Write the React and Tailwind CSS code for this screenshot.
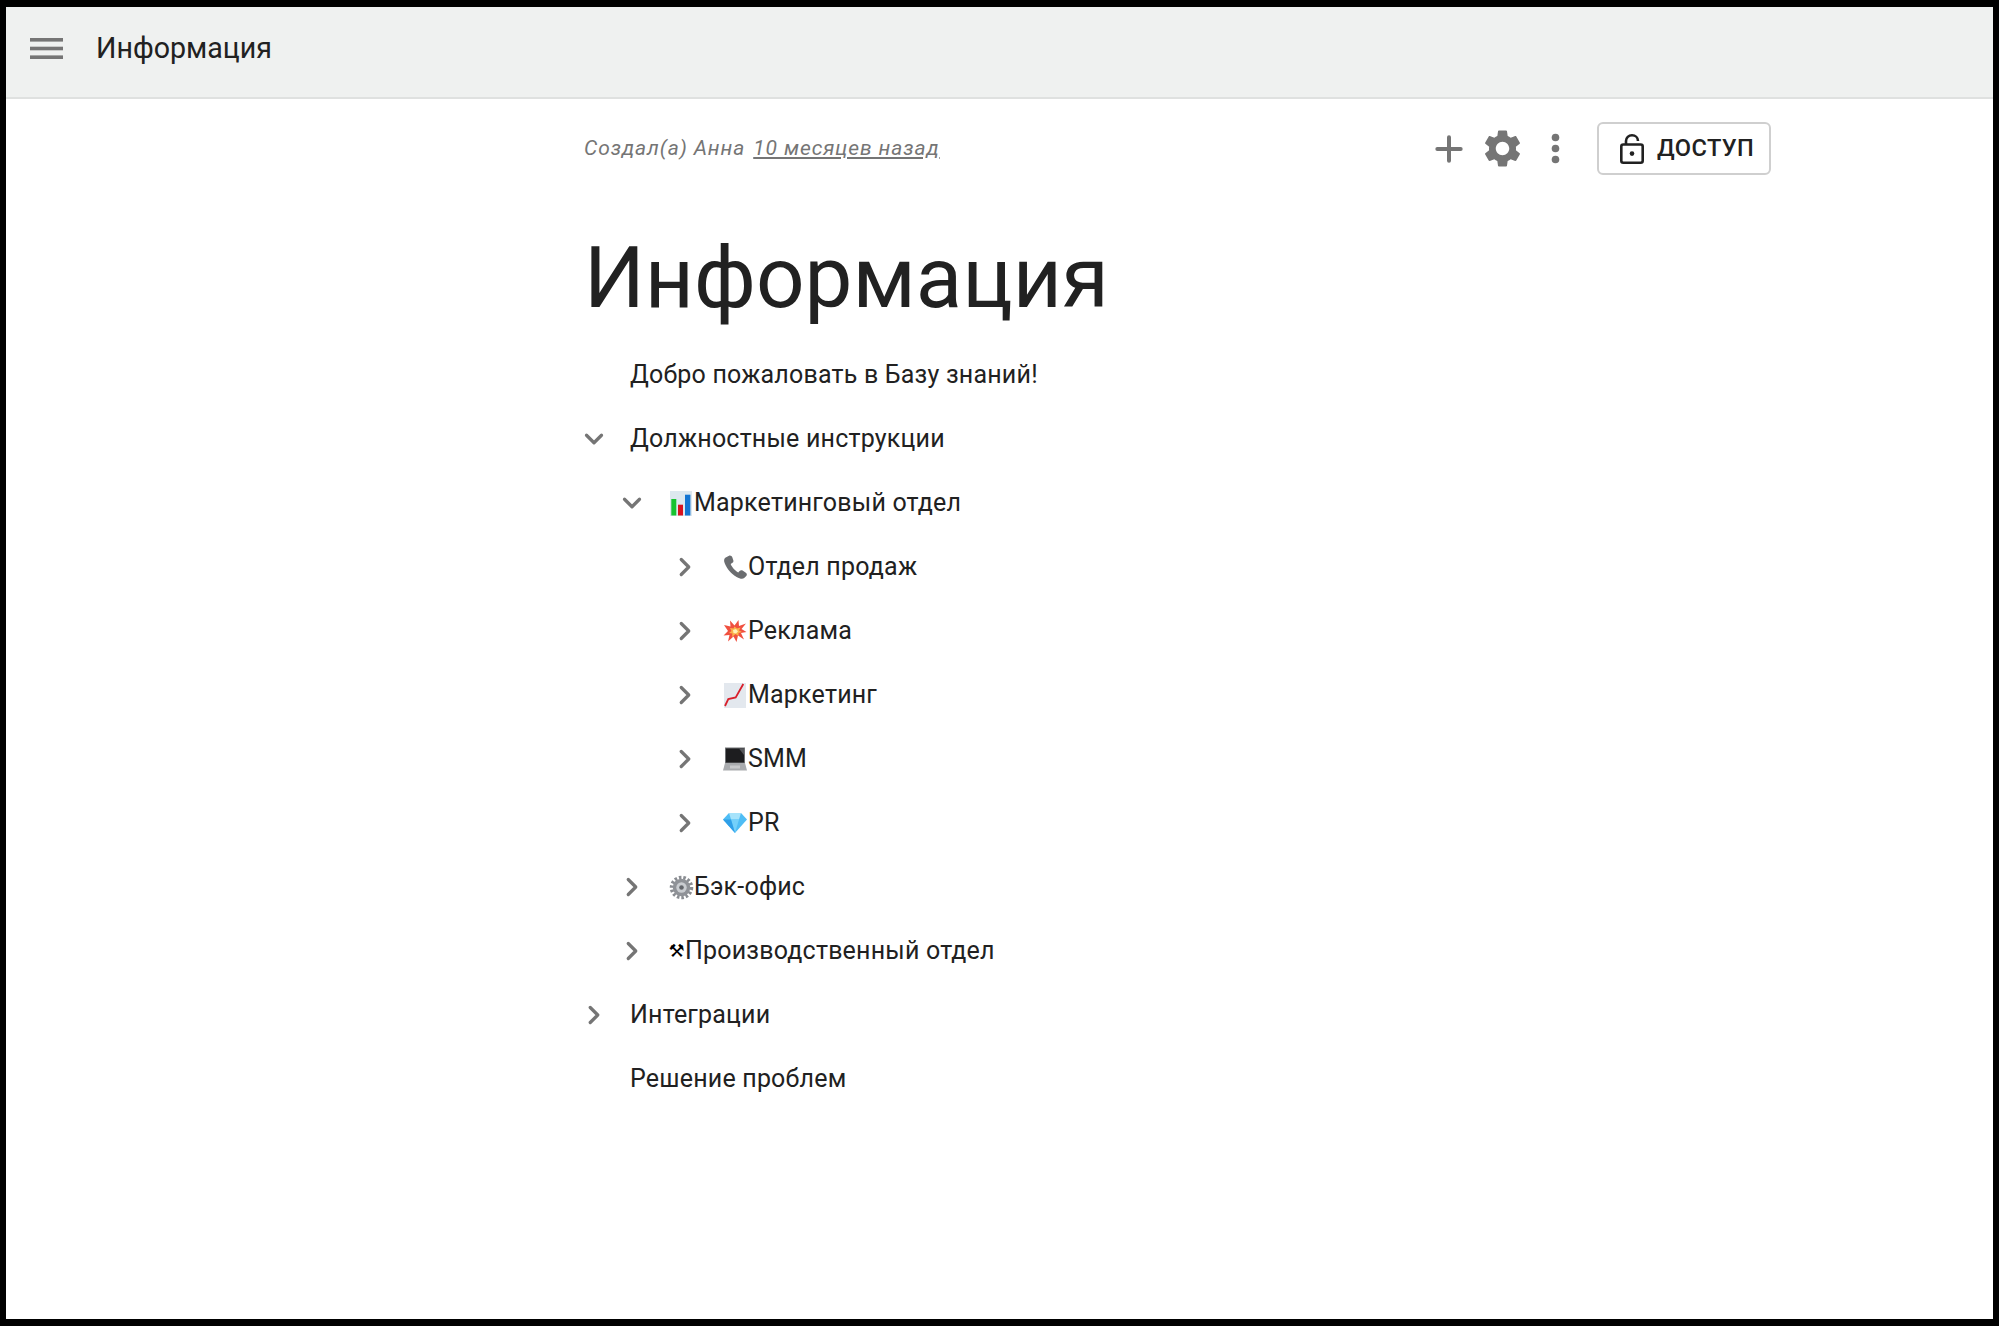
import React from 'react';
import { Plus, ChevronDown, ChevronRight } from 'lucide-react';

const ChartIcon = () => (
    <svg viewBox="0 0 22 25" className="w-[22px] h-[25px]">
        <rect x="0" y="0" width="22" height="25" fill="#dde8ef" />
        <rect x="1.3" y="8" width="5" height="16.5" fill="#16c22f" />
        <rect x="8" y="13.7" width="5" height="10.8" fill="#d8121f" />
        <rect x="15" y="3.7" width="5.4" height="20.8" fill="#1475d2" />
    </svg>
);

const PhoneIcon = () => (
    <svg viewBox="0 0 24 24" className="w-[26px] h-[26px]">
        <path d="M3 3.5 L6.5 1.5 C8 1 9 2 9.5 3 L10.5 6 C10.8 7.2 10 8 9 8.6 L8 9.2 C9 12 12 15.5 15 17 L16 16 C16.8 15 18 14.6 19 15.2 L22 17.2 C23.2 18 23.2 19.4 22.4 20.4 L20.5 22.2 C19 23.4 16.5 23 13.5 21.2 C8.5 18.4 4.5 13.5 2.5 8.5 C1.6 6.3 1.8 4.6 3 3.5 Z" fill="#6b6d70" />
    </svg>
);

const BoomIcon = () => (
    <svg viewBox="0 0 24 24" className="w-[24px] h-[24px]">
        <path d="M1 6 L7.5 7.5 L7 1.5 L11.5 6.5 L15.5 1 L16 7 L23 4.5 L18.5 10 L23.5 13 L18 14 L21 20.5 L15 16.5 L13.5 23 L10.5 17.5 L5 22.5 L6.5 16 L0.5 16.5 L5 12 Z" fill="#f0503f" />
        <path d="M7 9 L10.5 9.5 L11.5 7.5 L14 9.5 L17.5 8.5 L16 11.5 L19 13 L15.5 14 L15.5 17 L12.5 15 L9 18 L9.5 14.5 L6 14 L8.5 12 Z" fill="#fbb24a" />
        <path d="M10 11 L13 10 L15 12.5 L13 14.5 L10.5 14 Z" fill="#fff1b8" />
    </svg>
);

const TrendIcon = () => (
    <svg viewBox="0 0 22 25" className="w-[22px] h-[25px]">
        <rect x="0" y="0" width="22" height="25" fill="#e3e8ee" />
        <path d="M1 23 L4.3 16 L11.7 14.5 L19.3 1" fill="none" stroke="#d8202c" strokeWidth="1.8" />
    </svg>
);

const LaptopIcon = () => (
    <svg viewBox="0 0 24 24" className="w-[24px] h-[24px]">
        <rect x="2" y="0.5" width="20" height="15.5" fill="#6e7073" />
        <rect x="3" y="1.5" width="18" height="14" fill="#1d1d1f" />
        <path d="M16 1.5 H21 V8 Z" fill="#55565a" />
        <path d="M2 16 H22 L24 23.5 H0 Z" fill="#a9abae" />
        <rect x="7" y="18.5" width="10" height="3" fill="#c8c9cb" />
    </svg>
);

const GemIcon = () => (
    <svg viewBox="0 0 24 20" className="w-[24px] h-[20px]">
        <path d="M6 0 H18 L24 6.5 L12 20 L0 6.5 Z" fill="#4fbdf5" />
        <path d="M6 0 H18 L16 6.5 H8 Z" fill="#a6e3fb" />
        <path d="M8 6.5 H16 L12 20 Z" fill="#74d0fa" />
        <path d="M0 6.5 H8 L12 20 Z" fill="#2f9fe8" />
    </svg>
);

const GearEmoji = () => (
    <svg viewBox="0 0 24 24" className="w-[25px] h-[25px]">
        <circle cx="12" cy="12" r="9.5" fill="none" stroke="#8a8d92" strokeWidth="3.6" strokeDasharray="2.4 1.8" />
        <circle cx="12" cy="12" r="8.4" fill="#8f9297" />
        <circle cx="12" cy="12" r="5" fill="#c9ccd0" />
        <circle cx="12" cy="12" r="2.2" fill="#63666b" />
    </svg>
);

const HammerPick = () => (
    <span className="font-['DejaVu_Sans'] text-[18px] leading-none">⚒</span>
);

const MenuIcon = () => (
    <svg viewBox="0 0 33 21" className="w-[33px] h-[21px]" fill="#757575">
        <rect y="0" width="33" height="3.6" />
        <rect y="8.7" width="33" height="3.6" />
        <rect y="17.4" width="33" height="3.6" />
    </svg>
);

const GearSolid = () => (
    <svg viewBox="0 0 24 24" className="w-[45px] h-[45px]" fill="#757575">
        <path d="M19.14 12.94c.04-.3.06-.61.06-.94 0-.32-.02-.64-.07-.94l2.03-1.58c.18-.14.23-.41.12-.61l-1.92-3.32c-.12-.22-.37-.29-.59-.22l-2.39.96c-.5-.38-1.03-.7-1.62-.94l-.36-2.54c-.04-.24-.24-.41-.48-.41h-3.84c-.24 0-.43.17-.47.41l-.36 2.54c-.59.24-1.13.57-1.62.94l-2.39-.96c-.22-.08-.47 0-.59.22L2.74 8.87c-.12.21-.08.47.12.61l2.03 1.58c-.05.3-.09.63-.09.94s.02.64.07.94l-2.03 1.58c-.18.14-.23.41-.12.61l1.92 3.32c.12.22.37.29.59.22l2.39-.96c.5.38 1.03.7 1.62.94l.36 2.54c.05.24.24.41.48.41h3.84c.24 0 .44-.17.47-.41l.36-2.54c.59-.24 1.13-.56 1.62-.94l2.39.96c.22.08.47 0 .59-.22l1.92-3.32c.12-.22.07-.47-.12-.61l-2.01-1.58zM12 15.6c-1.98 0-3.6-1.62-3.6-3.6s1.62-3.6 3.6-3.6 3.6 1.62 3.6 3.6-1.62 3.6-3.6 3.6z" />
    </svg>
);

const DotsIcon = () => (
    <svg viewBox="0 0 45 45" className="w-[45px] h-[45px]" fill="#757575">
        <circle cx="22.5" cy="11.5" r="3.8" />
        <circle cx="22.5" cy="22.5" r="3.8" />
        <circle cx="22.5" cy="33.5" r="3.8" />
    </svg>
);

const LockOpen = () => (
    <svg viewBox="0 0 24 30" className="w-[24px] h-[30px] shrink-0" fill="none" stroke="#212121" strokeWidth="2.6">
        <rect x="1.3" y="10.5" width="21.4" height="18.2" rx="2" />
        <path d="M6 10.5 V7 C6 3.5 8.7 1.3 12 1.3 C15.3 1.3 18 3.5 18 7" />
        <circle cx="12" cy="19.6" r="2.3" fill="#212121" stroke="none" />
    </svg>
);

const rows = [
    { text: 'Добро пожаловать в Базу знаний!', level: 0 },
    { text: 'Должностные инструкции', level: 0, chevron: 'down' },
    { text: 'Маркетинговый отдел', level: 1, chevron: 'down', icon: <ChartIcon /> },
    { text: 'Отдел продаж', level: 2, chevron: 'right', icon: <PhoneIcon /> },
    { text: 'Реклама', level: 2, chevron: 'right', icon: <BoomIcon /> },
    { text: 'Маркетинг', level: 2, chevron: 'right', icon: <TrendIcon /> },
    { text: 'SMM', level: 2, chevron: 'right', icon: <LaptopIcon /> },
    { text: 'PR', level: 2, chevron: 'right', icon: <GemIcon /> },
    { text: 'Бэк-офис', level: 1, chevron: 'right', icon: <GearEmoji /> },
    { text: 'Производственный отдел', level: 1, chevron: 'right', icon: <HammerPick />, narrow: true },
    { text: 'Интеграции', level: 0, chevron: 'right' },
    { text: 'Решение проблем', level: 0 },
];

const chevronBox = ['w-[46px]', 'w-[46px] ml-[38px]', 'w-[47px] ml-[91px]'];

const TreeRow = ({ row }) => (
    <div className="h-[64px] flex items-center">
        <div className={`${chevronBox[row.level]} shrink-0 flex items-center`}>
            {row.chevron === 'down' && <ChevronDown className="w-[30px] h-[30px] -ml-[5px] text-[#757575]" strokeWidth={2.6} />}
            {row.chevron === 'right' && <ChevronRight className="w-[30px] h-[30px] -ml-[5px] text-[#757575]" strokeWidth={2.6} />}
        </div>
        <div className="flex items-center">
            {row.icon && (
                <div className={`${row.narrow ? 'w-[17px]' : 'w-[26px]'} shrink-0 flex items-center justify-center`}>
                    {row.icon}
                </div>
            )}
            <span className="text-[25px] text-[#212121] tracking-[0.2px]">{row.text}</span>
        </div>
    </div>
);

const App = () => {
    return (
        <div className="w-[1999px] h-[1326px] bg-black pt-[7px] px-[6px] pb-[7px] font-['Roboto',sans-serif]">
            <div className="h-full bg-white flex flex-col">
                <header className="h-[92px] shrink-0 bg-[#eff1f0] border-b-2 border-[#dfe1e0] flex items-center pb-[8px] pl-[24px]">
                    <MenuIcon />
                    <span className="ml-[33px] text-[28.6px] text-[#212121]">Информация</span>
                </header>

                <main className="pl-[578px] pr-[222px]">
                    <div className="h-[53px] mt-[23px] flex items-center justify-between">
                        <div className="text-[21px] italic text-[#757575] tracking-[0.9px]">
                            Создал(а) Анна <a className="underline ml-[2px]">10 месяцев назад</a>
                        </div>
                        <div className="flex items-center">
                            <Plus className="w-[40px] h-[40px] mx-[3px] text-[#757575]" strokeWidth={2.4} />
                            <div className="ml-[8px]"><GearSolid /></div>
                            <div className="ml-[8px]"><DotsIcon /></div>
                            <button className="ml-[19px] w-[174px] h-[53px] border-2 border-[#cfcfcf] rounded-[6px] flex items-center pl-[21px] gap-[13px] text-[23.6px] font-medium text-[#212121] tracking-[0.4px]">
                                <LockOpen />
                                ДОСТУП
                            </button>
                        </div>
                    </div>

                    <h1 className="mt-[51px] text-[85.3px] leading-[104px] font-normal text-[#212121]">Информация</h1>

                    <div className="mt-[13px]">
                        {rows.map((row, idx) => (
                            <TreeRow key={idx} row={row} />
                        ))}
                    </div>
                </main>
            </div>
        </div>
    );
};

export default App;
